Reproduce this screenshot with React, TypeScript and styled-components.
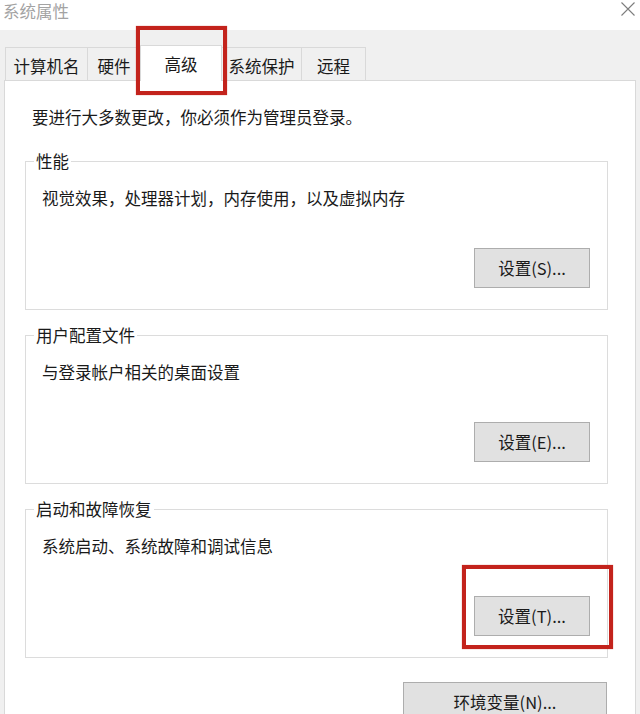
import React from "react";
import styled, { createGlobalStyle } from "styled-components";

const GlobalStyle = createGlobalStyle`
  html, body {
    margin: 0;
    padding: 0;
    background: #f0f0f0;
  }
  body {
    font-family: "Noto Sans CJK SC", "Microsoft YaHei", "Noto Sans", sans-serif;
    font-size: 16.5px;
    color: #1a1a1a;
  }
  * { box-sizing: border-box; }
`;

const Window = styled.div`
  position: relative;
  width: 640px;
  height: 714px;
  overflow: hidden;
  background: #f0f0f0;
  display: flex;
  flex-direction: column;
`;

const TitleBar = styled.div`
  height: 30px;
  flex: none;
  background: #ffffff;
  display: flex;
  justify-content: space-between;
  align-items: flex-start;
  padding: 1px 4px 0 3px;
`;

const Title = styled.div`
  font-size: 16.5px;
  line-height: 20px;
  color: #a3a3a3;
`;

const CloseIcon = styled.svg`
  width: 16px;
  height: 16px;
`;

const TabStrip = styled.div`
  position: relative;
  z-index: 1;
  flex: none;
  display: flex;
  align-items: flex-end;
  height: 33px;
  margin-top: 17px;
  padding-left: 5px;
`;

const Tab = styled.div<{ $w: number; $active?: boolean }>`
  width: ${(p) => p.$w}px;
  height: ${(p) => (p.$active ? 36 : 33)}px;
  margin-left: -1px;
  margin-bottom: ${(p) => (p.$active ? -1 : 0)}px;
  border: 1px solid #d9d9d9;
  border-bottom: none;
  background: ${(p) => (p.$active ? "#ffffff" : "#f0f0f0")};
  display: flex;
  align-items: center;
  justify-content: center;
  padding-top: ${(p) => (p.$active ? 0 : 3)}px;
  font-size: 16.5px;
  line-height: 22px;
  color: #1a1a1a;
  white-space: nowrap;
  &:first-child {
    margin-left: 0;
  }
`;

const Panel = styled.div`
  flex: 1;
  margin: 0 4px;
  background: #ffffff;
  border: 1px solid #d9d9d9;
  padding-top: 25px;
  display: flex;
  flex-direction: column;
`;

const Intro = styled.p`
  margin: 0 0 0 27px;
  font-size: 16.5px;
  line-height: 22px;
`;

const Group = styled.fieldset<{ $top: number }>`
  margin: ${(p) => p.$top}px 27px 0 20px;
  min-width: 0;
  border: 1px solid #dcdcdc;
  padding: 15px 17px 21px 16px;
`;

const Legend = styled.legend`
  margin-left: -8px;
  padding: 0 2px;
  font-size: 16.5px;
  line-height: 22px;
`;

const Desc = styled.div`
  font-size: 16.5px;
  line-height: 22px;
`;

const ButtonRow = styled.div`
  display: flex;
  justify-content: flex-end;
  margin-top: 39px;
`;

const Button = styled.button<{ $w: number }>`
  width: ${(p) => p.$w}px;
  height: 40px;
  padding: 0;
  background: #e1e1e1;
  border: 1px solid #adadad;
  font-family: inherit;
  font-size: 16.5px;
  color: #1a1a1a;
  cursor: default;
`;

const Footer = styled.div`
  display: flex;
  justify-content: flex-end;
  margin: 24px 28px 0 0;
`;

const Highlight = styled.div<{ $x: number; $y: number; $w: number; $h: number }>`
  position: absolute;
  left: ${(p) => p.$x}px;
  top: ${(p) => p.$y}px;
  width: ${(p) => p.$w}px;
  height: ${(p) => p.$h}px;
  border: 4px solid #c3231c;
  box-shadow: 0 0 1px rgba(195, 35, 28, 0.6);
  z-index: 5;
  pointer-events: none;
`;

const groups = [
  { title: "性能", desc: "视觉效果，处理器计划，内存使用，以及虚拟内存", btn: "设置(S)...", top: 22 },
  { title: "用户配置文件", desc: "与登录帐户相关的桌面设置", btn: "设置(E)...", top: 14 },
  { title: "启动和故障恢复", desc: "系统启动、系统故障和调试信息", btn: "设置(T)...", top: 14 },
];

const tabs = [
  { label: "计算机名", w: 83 },
  { label: "硬件", w: 54 },
  { label: "高级", w: 82, active: true },
  { label: "系统保护", w: 81 },
  { label: "远程", w: 65 },
];

export default function App() {
  return (
    <>
      <GlobalStyle />
      <Window>
        <TitleBar>
          <Title>系统属性</Title>
          <CloseIcon viewBox="0 0 16 16">
            <path d="M1.5 1.5 L14.5 14.5 M14.5 1.5 L1.5 14.5" stroke="#7d7d7d" strokeWidth="1.1" fill="none" />
          </CloseIcon>
        </TitleBar>
        <TabStrip>
          {tabs.map((t) => (
            <Tab key={t.label} $w={t.w} $active={t.active}>
              {t.label}
            </Tab>
          ))}
        </TabStrip>
        <Panel>
          <Intro>要进行大多数更改，你必须作为管理员登录。</Intro>
          {groups.map((g) => (
            <Group key={g.title} $top={g.top}>
              <Legend>{g.title}</Legend>
              <Desc>{g.desc}</Desc>
              <ButtonRow>
                <Button $w={116}>{g.btn}</Button>
              </ButtonRow>
            </Group>
          ))}
          <Footer>
            <Button $w={204}>环境变量(N)...</Button>
          </Footer>
        </Panel>
        <Highlight $x={136} $y={26} $w={91} $h={69} />
        <Highlight $x={462} $y={565} $w={151} $h={84} />
      </Window>
    </>
  );
}
